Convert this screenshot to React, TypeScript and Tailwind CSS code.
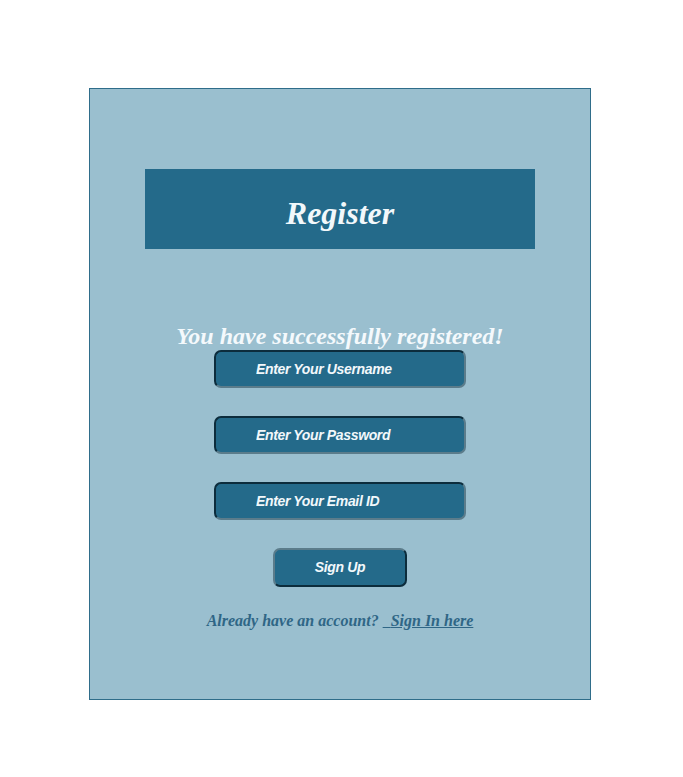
import { useState } from "react";

const serif = { fontFamily: '"Liberation Serif", "Times New Roman", serif' };

export default function App() {
    const [form, setForm] = useState({ username: "", password: "", email: "" });

    const fields: { key: keyof typeof form; placeholder: string; type: string }[] = [
        { key: "username", placeholder: "Enter Your Username", type: "text" },
        { key: "password", placeholder: "Enter Your Password", type: "password" },
        { key: "email", placeholder: "Enter Your Email ID", type: "email" },
    ];

    return (
        <div className="min-h-[777px] bg-white pt-[88px] font-['Liberation_Sans',Arial,sans-serif]">
            <div className="ml-[89px] w-[502px] h-[612px] border border-[#2f6d8a] bg-[#9abfcf] flex flex-col items-center pt-[80px]">
                <div className="w-[390px] h-[80px] bg-[#246a8a] flex items-center justify-center">
                    <h1 className="text-[32px] leading-none font-bold italic text-[#f2f8fb] mt-[8px]" style={serif}>
                        Register
                    </h1>
                </div>

                <p className="mt-[73px] text-[24px] leading-[28px] font-bold italic text-[#f4f9fc]" style={serif}>
                    You have successfully registered!
                </p>

                <form className="flex flex-col items-center" onSubmit={(e) => e.preventDefault()}>
                    {fields.map((f, i) => (
                        <input
                            key={f.key}
                            type={f.type}
                            placeholder={f.placeholder}
                            value={form[f.key]}
                            onChange={(e) => setForm((prev) => ({ ...prev, [f.key]: e.target.value }))}
                            className={`w-[252px] h-[38px] rounded-[7px] border-2 border-t-[#0c2c3c] border-l-[#0c2c3c] border-r-[#5b7c8b] border-b-[#5b7c8b] bg-[#246a8a] pl-[40px] text-[14px] tracking-[-0.35px] font-bold italic text-white placeholder:text-[#f2f8fb] outline-none ${i > 0 ? "mt-[28px]" : ""}`}
                        />
                    ))}

                    <button
                        type="submit"
                        className="mt-[28px] w-[134px] h-[39px] rounded-[7px] border-2 border-t-[#5b7c8b] border-l-[#5b7c8b] border-r-[#0c2c3c] border-b-[#0c2c3c] bg-[#246a8a] text-[14px] tracking-[-0.35px] font-bold italic text-[#f2f8fb]"
                    >
                        Sign Up
                    </button>
                </form>

                <p className="mt-[22px] text-[16px] font-bold italic text-[#2f6686]" style={serif}>
                    Already have an account?{"  "}
                    <a href="#" className="underline whitespace-pre">
                        {"  "}Sign In here
                    </a>
                </p>
            </div>
        </div>
    );
}
